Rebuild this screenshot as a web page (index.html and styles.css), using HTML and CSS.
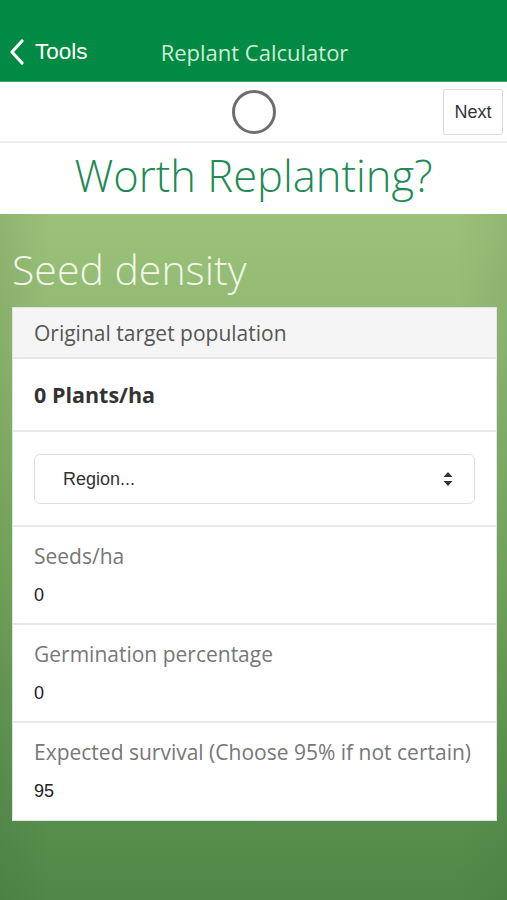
FILE: index.html
```html
<!DOCTYPE html>
<html>
<head>
<meta charset="utf-8">
<link rel="stylesheet" href="styles.css">
</head>
<body>
<div class="app">
  <header class="topbar">
    <div class="back">
      <svg class="chev" width="16" height="26" viewBox="0 0 16 26"><path d="M13 2 L3 13 L13 24" fill="none" stroke="#fff" stroke-width="3.2" stroke-linecap="round" stroke-linejoin="round"/></svg>
      <span class="back-text">Tools</span>
    </div>
    <div class="title">Replant Calculator</div>
  </header>
  <nav class="stepbar">
    <div class="spinner"></div>
    <button class="next">Next</button>
  </nav>
  <div class="headline">Worth Replanting?</div>
  <main class="content">
    <h2 class="section">Seed density</h2>
    <div class="card">
      <div class="row head">Original target population</div>
      <div class="row result">0 Plants/ha</div>
      <div class="row selrow">
        <div class="select">
          <span>Region...</span>
          <svg class="arrows" width="10" height="16" viewBox="0 0 10 16"><path d="M5 1 L9.5 6 L0.5 6 Z M5 15 L9.5 10 L0.5 10 Z" fill="#333"/></svg>
        </div>
      </div>
      <div class="row field">
        <div class="label">Seeds/ha</div>
        <div class="value">0</div>
      </div>
      <div class="row field">
        <div class="label">Germination percentage</div>
        <div class="value">0</div>
      </div>
      <div class="row field last">
        <div class="label">Expected survival (Choose 95% if not certain)</div>
        <div class="value">95</div>
      </div>
    </div>
  </main>
</div>
</body>
</html>
```
FILE: styles.css
```css
* { box-sizing: border-box; }
html, body { margin: 0; padding: 0; }
body { width: 507px; height: 900px; overflow: hidden; font-family: "Open Sans", sans-serif; }
.app { display: flex; flex-direction: column; height: 900px; }
.topbar {
  height: 82px; background: #018a43; display: flex; align-items: center;
  padding-top: 22px; position: relative; border-bottom: 1px solid #3fa867;
}
.back { display: flex; align-items: center; padding-left: 9px; gap: 10px; }
.chev { display: block; }
.back-text { font-family: "Liberation Sans", Arial, sans-serif; color: #fff; font-size: 22.5px; }
.title {
  position: absolute; left: 0; right: 0; top: 22px; bottom: 0;
  display: flex; align-items: center; justify-content: center;
  color: #cdeed5; font-size: 22px; padding-left: 2px;
}
.stepbar {
  height: 61px; background: #fff; border-bottom: 2px solid #eeeeee;
  display: flex; align-items: center; justify-content: center; position: relative;
}
.spinner { width: 44px; height: 44px; border-radius: 50%; border: 3px solid #6e6e6e; }
.next {
  position: absolute; right: 4px; top: 7px; width: 60px; height: 46px;
  background: #fff; border: 1px solid #dcdcdc; border-radius: 2px;
  font-family: "Liberation Sans", Arial, sans-serif; font-size: 18px; color: #333; padding: 0;
}
.headline {
  height: 71px; background: #fff; text-align: center;
  color: #1f8a55; font-size: 43.5px; font-weight: 300; line-height: 66px;
}
.content {
  flex: 1; padding: 0 10px 0 12px;
  background:
    linear-gradient(to right, rgba(40,80,30,0.10), rgba(0,0,0,0) 10%, rgba(0,0,0,0) 90%, rgba(40,80,30,0.08)),
    linear-gradient(to bottom, #9bc07a 0%, #90b971 20%, #7aa95f 50%, #5f9552 78%, #4f8847 100%);
}
.section {
  margin: 0; font-weight: 300; font-size: 41px; color: #f1f7e8;
  height: 93px; line-height: 110px; padding-left: 0;
}
.card { background: #fff; border: 1px solid #e3e3e3; }
.row { border-bottom: 2px solid #e8e8e8; padding: 0 21px; }
.row.last { border-bottom: none; }
.head { background: #f5f5f5; height: 51px; line-height: 50px; font-size: 21px; color: #555; }
.result { height: 73px; line-height: 72px; font-size: 21.5px; font-weight: 700; color: #333; }
.selrow { height: 95px; padding-top: 22px; }
.select {
  height: 50px; border: 1px solid #dedede; border-radius: 6px;
  display: flex; align-items: center; justify-content: space-between;
  padding: 0 21px 0 28px;
  font-family: "Liberation Sans", Arial, sans-serif; font-size: 18px; color: #333;
}
.arrows { display: block; }
.field { height: 98px; padding-top: 14px; }
.field.last { height: 97px; }
.label { font-size: 21px; color: #777; line-height: 30px; }
.value { font-family: "Liberation Sans", Arial, sans-serif; font-size: 18px; color: #222; margin-top: 14px; line-height: 20px; }
```
